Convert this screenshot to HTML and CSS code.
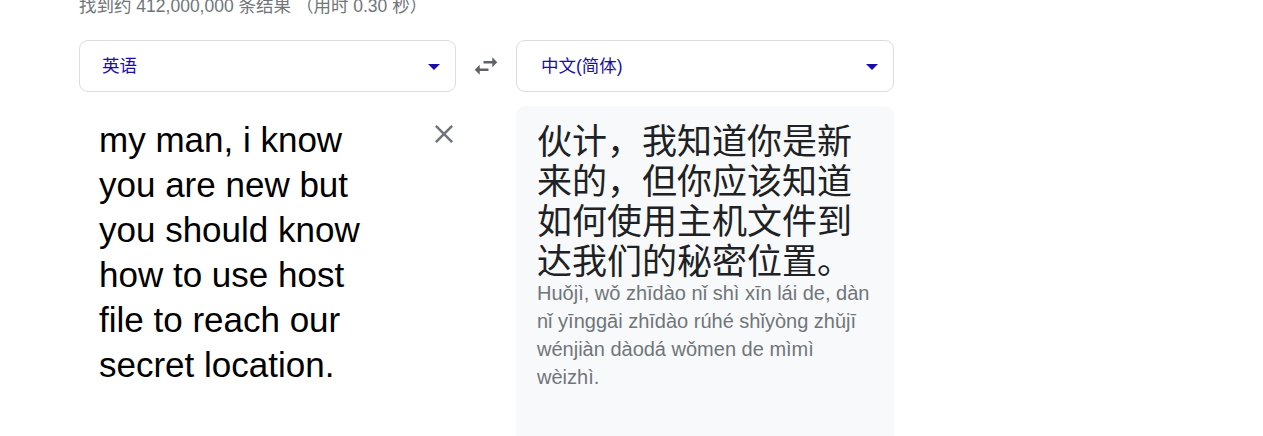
FILE: index.html
```html
<!DOCTYPE html>
<html lang="zh-CN">
<head>
<meta charset="utf-8">
<title>翻译</title>
<link rel="stylesheet" href="styles.css">
</head>
<body>
<div class="page">
  <div class="stats">找到约 412,000,000 条结果 （用时 0.30 秒）</div>
  <div class="translator">
    <div class="lang-row">
      <div class="select">
        <span class="select-label">英语</span>
        <span class="caret"></span>
      </div>
      <div class="swap">
        <svg class="swap-icon" viewBox="0 0 24 24" width="30" height="30"><path d="M6.99 11L3 15l3.99 4v-3H14v-2H6.99v-3zM21 9l-3.990-4v3H10v2h7.01v3L21 9z"/></svg>
      </div>
      <div class="select select-right">
        <span class="select-label">中文(简体)</span>
        <span class="caret"></span>
      </div>
    </div>
    <div class="panels">
      <div class="source">
        <div class="source-text">my man, i know you are new but you should know how to use host file to reach our secret location.</div>
        <svg class="clear-icon" viewBox="5 5 14 14" width="18" height="18"><path d="M19 6.41L17.590 5 12 10.59 6.41 5 5 6.41 10.59 12 5 17.59 6.41 19 12 13.41 17.59 19 19 17.59 13.41 12z"/></svg>
      </div>
      <div class="spacer"></div>
      <div class="target">
        <div class="target-text">伙计，我知道你是新来的，但你应该知道如何使用主机文件到达我们的秘密位置。</div>
        <div class="pinyin">Huǒjì, wǒ zhīdào nǐ shì xīn lái de, dàn nǐ yīnggāi zhīdào rúhé shǐyòng zhǔjī wénjiàn dàodá wǒmen de mìmì wèizhì.</div>
      </div>
    </div>
  </div>
</div>
</body>
</html>
```

FILE: styles.css
```css
html, body {
  margin: 0;
  padding: 0;
  background: #fff;
  overflow: hidden;
}

body {
  font-family: "Liberation Sans", Arial, "Noto Sans CJK SC", sans-serif;
}

.page {
  padding-left: 79px;
}

.stats {
  margin-top: -5px;
  height: 22px;
  line-height: 22px;
  font-size: 17.5px;
  color: #70757a;
  white-space: nowrap;
}

.translator {
  margin-top: 23px;
  width: 815px;
}

.lang-row {
  display: flex;
  align-items: center;
}

.select {
  box-sizing: border-box;
  width: 377px;
  height: 52px;
  border: 1px solid #dadce0;
  border-radius: 9px;
  display: flex;
  align-items: center;
  justify-content: space-between;
  padding: 0 15px 0 22px;
}

.select-right {
  width: 378px;
  padding-left: 24px;
}

.select-label {
  font-size: 17.5px;
  color: #1a0dab;
  margin-bottom: 4px;
}

.caret {
  width: 0;
  height: 0;
  border-left: 6px solid transparent;
  border-right: 6px solid transparent;
  border-top: 6px solid #1a0dab;
  margin-top: 2px;
}

.swap {
  width: 60px;
  display: flex;
  justify-content: center;
}

.swap-icon {
  fill: #5f6368;
  display: block;
}

.panels {
  display: flex;
  margin-top: 14px;
}

.source {
  box-sizing: border-box;
  width: 377px;
  display: flex;
  justify-content: space-between;
  align-items: flex-start;
  padding: 11px 3px 0 20px;
}

.source-text {
  width: 280px;
  font-size: 35px;
  line-height: 45px;
  color: #000;
}

.clear-icon {
  fill: #70757a;
  margin-top: 8px;
  display: block;
}

.spacer {
  width: 60px;
}

.target {
  box-sizing: border-box;
  width: 378px;
  min-height: 360px;
  background: #f8f9fa;
  border-radius: 9px 9px 0 0;
  padding: 13px 20px 0 21px;
}

.target-text {
  font-family: "Noto Sans CJK SC", sans-serif;
  font-size: 35px;
  line-height: 40px;
  color: #202124;
}

.pinyin {
  font-size: 20px;
  line-height: 28px;
  color: #70757a;
}
```
